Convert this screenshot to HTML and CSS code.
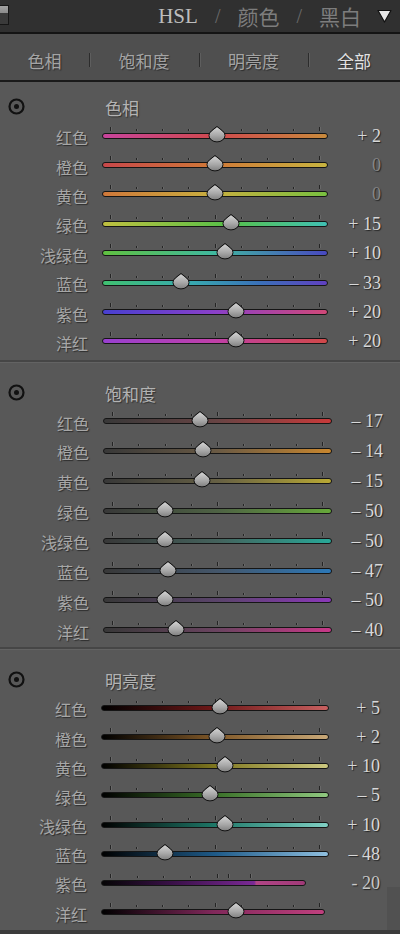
FILE: index.html
```html
<!DOCTYPE html>
<html lang="zh-CN">
<head>
<meta charset="utf-8">
<title>HSL</title>
<link rel="stylesheet" href="styles.css">
</head>
<body>
<div class="panel">
  <header class="top">
    <div class="corner"></div>
    <nav class="modes">
      <span class="mode hsl">HSL</span>
      <span class="slash">/</span>
      <span class="mode">颜色</span>
      <span class="slash">/</span>
      <span class="mode">黑白</span>
      <svg class="caret" viewBox="0 0 15 14"><polygon points="1,1.5 14,1.5 7.5,13" fill="#e6e6e6" stroke="#111" stroke-width="1.2" stroke-linejoin="round"/></svg>
    </nav>
  </header>

  <div class="tabs">
    <span class="tab">色相</span>
    <span class="tab">饱和度</span>
    <span class="tab">明亮度</span>
    <span class="tab active">全部</span>
  </div>

  <section class="group g1">
    <div class="head">
      <svg class="target" viewBox="0 0 17 17"><circle cx="8.5" cy="8.5" r="7" fill="none" stroke="#111" stroke-width="2.2"/><circle cx="8.5" cy="8.5" r="2.5" fill="#111"/></svg>
      <span class="gtitle">色相</span>
    </div>
    <div class="row"><span class="label">红色</span><div class="slider" style="--v:2"><div class="ticks"><i></i><i></i><i></i><i></i><i></i><i></i><i></i><i></i><i></i></div><div class="track h-red"></div><span class="thumb"></span></div><span class="val">+ 2</span></div>
    <div class="row"><span class="label">橙色</span><div class="slider" style="--v:0"><div class="ticks"><i></i><i></i><i></i><i></i><i></i><i></i><i></i><i></i><i></i></div><div class="track h-orange"></div><span class="thumb"></span></div><span class="val zero">0</span></div>
    <div class="row"><span class="label">黄色</span><div class="slider" style="--v:0"><div class="ticks"><i></i><i></i><i></i><i></i><i></i><i></i><i></i><i></i><i></i></div><div class="track h-yellow"></div><span class="thumb"></span></div><span class="val zero">0</span></div>
    <div class="row"><span class="label">绿色</span><div class="slider" style="--v:15"><div class="ticks"><i></i><i></i><i></i><i></i><i></i><i></i><i></i><i></i><i></i></div><div class="track h-green"></div><span class="thumb"></span></div><span class="val">+ 15</span></div>
    <div class="row"><span class="label">浅绿色</span><div class="slider" style="--v:10"><div class="ticks"><i></i><i></i><i></i><i></i><i></i><i></i><i></i><i></i><i></i></div><div class="track h-aqua"></div><span class="thumb"></span></div><span class="val">+ 10</span></div>
    <div class="row"><span class="label">蓝色</span><div class="slider" style="--v:-33"><div class="ticks"><i></i><i></i><i></i><i></i><i></i><i></i><i></i><i></i><i></i></div><div class="track h-blue"></div><span class="thumb"></span></div><span class="val">– 33</span></div>
    <div class="row"><span class="label">紫色</span><div class="slider" style="--v:20"><div class="ticks"><i></i><i></i><i></i><i></i><i></i><i></i><i></i><i></i><i></i></div><div class="track h-purple"></div><span class="thumb"></span></div><span class="val">+ 20</span></div>
    <div class="row"><span class="label">洋红</span><div class="slider" style="--v:20"><div class="ticks"><i></i><i></i><i></i><i></i><i></i><i></i><i></i><i></i><i></i></div><div class="track h-magenta"></div><span class="thumb"></span></div><span class="val">+ 20</span></div>
  </section>

  <div class="sep sep1"></div>

  <section class="group g2">
    <div class="head">
      <svg class="target" viewBox="0 0 17 17"><circle cx="8.5" cy="8.5" r="7" fill="none" stroke="#111" stroke-width="2.2"/><circle cx="8.5" cy="8.5" r="2.5" fill="#111"/></svg>
      <span class="gtitle">饱和度</span>
    </div>
    <div class="row"><span class="label">红色</span><div class="slider" style="--v:-17"><div class="ticks"><i></i><i></i><i></i><i></i><i></i><i></i><i></i><i></i><i></i></div><div class="track s-red"></div><span class="thumb"></span></div><span class="val">– 17</span></div>
    <div class="row"><span class="label">橙色</span><div class="slider" style="--v:-14"><div class="ticks"><i></i><i></i><i></i><i></i><i></i><i></i><i></i><i></i><i></i></div><div class="track s-orange"></div><span class="thumb"></span></div><span class="val">– 14</span></div>
    <div class="row"><span class="label">黄色</span><div class="slider" style="--v:-15"><div class="ticks"><i></i><i></i><i></i><i></i><i></i><i></i><i></i><i></i><i></i></div><div class="track s-yellow"></div><span class="thumb"></span></div><span class="val">– 15</span></div>
    <div class="row"><span class="label">绿色</span><div class="slider" style="--v:-50"><div class="ticks"><i></i><i></i><i></i><i></i><i></i><i></i><i></i><i></i><i></i></div><div class="track s-green"></div><span class="thumb"></span></div><span class="val">– 50</span></div>
    <div class="row"><span class="label">浅绿色</span><div class="slider" style="--v:-50"><div class="ticks"><i></i><i></i><i></i><i></i><i></i><i></i><i></i><i></i><i></i></div><div class="track s-aqua"></div><span class="thumb"></span></div><span class="val">– 50</span></div>
    <div class="row"><span class="label">蓝色</span><div class="slider" style="--v:-47"><div class="ticks"><i></i><i></i><i></i><i></i><i></i><i></i><i></i><i></i><i></i></div><div class="track s-blue"></div><span class="thumb"></span></div><span class="val">– 47</span></div>
    <div class="row"><span class="label">紫色</span><div class="slider" style="--v:-50"><div class="ticks"><i></i><i></i><i></i><i></i><i></i><i></i><i></i><i></i><i></i></div><div class="track s-purple"></div><span class="thumb"></span></div><span class="val">– 50</span></div>
    <div class="row"><span class="label">洋红</span><div class="slider" style="--v:-40"><div class="ticks"><i></i><i></i><i></i><i></i><i></i><i></i><i></i><i></i><i></i></div><div class="track s-magenta"></div><span class="thumb"></span></div><span class="val">– 40</span></div>
  </section>

  <div class="sep sep2"></div>

  <section class="group g3">
    <div class="head">
      <svg class="target" viewBox="0 0 17 17"><circle cx="8.5" cy="8.5" r="7" fill="none" stroke="#111" stroke-width="2.2"/><circle cx="8.5" cy="8.5" r="2.5" fill="#111"/></svg>
      <span class="gtitle">明亮度</span>
    </div>
    <div class="row"><span class="label">红色</span><div class="slider" style="--v:5"><div class="ticks"><i></i><i></i><i></i><i></i><i></i><i></i><i></i><i></i><i></i></div><div class="track l-red"></div><span class="thumb"></span></div><span class="val">+ 5</span></div>
    <div class="row"><span class="label">橙色</span><div class="slider" style="--v:2"><div class="ticks"><i></i><i></i><i></i><i></i><i></i><i></i><i></i><i></i><i></i></div><div class="track l-orange"></div><span class="thumb"></span></div><span class="val">+ 2</span></div>
    <div class="row"><span class="label">黄色</span><div class="slider" style="--v:10"><div class="ticks"><i></i><i></i><i></i><i></i><i></i><i></i><i></i><i></i><i></i></div><div class="track l-yellow"></div><span class="thumb"></span></div><span class="val">+ 10</span></div>
    <div class="row"><span class="label">绿色</span><div class="slider" style="--v:-5"><div class="ticks"><i></i><i></i><i></i><i></i><i></i><i></i><i></i><i></i><i></i></div><div class="track l-green"></div><span class="thumb"></span></div><span class="val">– 5</span></div>
    <div class="row"><span class="label">浅绿色</span><div class="slider" style="--v:10"><div class="ticks"><i></i><i></i><i></i><i></i><i></i><i></i><i></i><i></i><i></i></div><div class="track l-aqua"></div><span class="thumb"></span></div><span class="val">+ 10</span></div>
    <div class="row"><span class="label">蓝色</span><div class="slider" style="--v:-48"><div class="ticks"><i></i><i></i><i></i><i></i><i></i><i></i><i></i><i></i><i></i></div><div class="track l-blue"></div><span class="thumb"></span></div><span class="val">– 48</span></div>
    <div class="row"><span class="label">紫色</span><div class="slider"><div class="ticks odd"><i></i><i></i><i></i><i></i><i></i><i></i><i></i></div><div class="track l-purple cut-purple"></div></div><span class="val dim">- 20</span></div>
    <div class="row"><span class="label">洋红</span><div class="slider" style="--v:20"><div class="ticks"><i></i><i></i><i></i><i></i><i></i><i></i><i></i><i></i><i></i></div><div class="track l-magenta cut-magenta"></div><span class="thumb"></span></div><span class="val"></span></div>
  </section>

  <div class="edge"></div>
</div>
</body>
</html>
```

FILE: styles.css
```css
* { box-sizing: border-box; }

body {
  margin: 0;
  background: #3b3b3b;
  font-family: "Noto Sans CJK SC", "Noto Sans", sans-serif;
}

.panel {
  position: relative;
  width: 400px;
  height: 930px;
  background: #585858;
  overflow: hidden;
}

/* ---------- top header ---------- */
.top {
  height: 34px;
  background: #303030;
  border-bottom: 2px solid #141414;
  display: flex;
  align-items: center;
  justify-content: space-between;
  padding-right: 8px;
}

.corner {
  align-self: flex-start;
  margin-top: 5px;
  width: 9px;
  height: 20px;
  background: linear-gradient(#a2a2a2 0, #8c8c8c 38%, #3a3a3a 40%, #3a3a3a 100%);
  border: 1px solid #161616;
  border-left: none;
}

.modes {
  display: flex;
  align-items: center;
  gap: 17px;
}

.mode {
  font-size: 21px;
  line-height: 1;
  color: #7d7d7d;
}

.mode.hsl {
  font-family: "Liberation Serif", serif;
  font-size: 21px;
  color: #bdbdbd;
}

.slash {
  font-family: "Liberation Serif", serif;
  font-size: 20px;
  line-height: 1;
  color: #6a6a6a;
}

.caret {
  width: 15px;
  height: 14px;
  margin-left: -1px;
}

/* ---------- tabs ---------- */
.tabs {
  height: 48px;
  padding-top: 6px;
  background: #4f4f4f;
  border-bottom: 2px solid #1a1a1a;
  display: grid;
  grid-template-columns: 89px 110px 109px 1fr;
  align-items: center;
}

.tab {
  position: relative;
  text-align: center;
  font-size: 17px;
  line-height: 1;
  color: #a4a4a4;
  text-shadow: 1px 1px 1px rgba(0, 0, 0, 0.45);
}

.tab + .tab::before {
  content: "";
  position: absolute;
  left: 0;
  top: 50%;
  width: 1px;
  height: 14px;
  transform: translateY(-50%);
  background: #2c2c2c;
  box-shadow: 1px 0 0 #5e5e5e;
}

.tab.active { color: #e2e2e2; }

/* ---------- groups ---------- */
.group { padding-top: var(--pt); }

.g1 { --pt: 9px;  --hh: 30px; --rh: 29.4px; --lw: 88px; --tw: 226px; --pad: 8px; --vr: 19px; }
.g2 { --pt: 16px; --hh: 27px; --rh: 29.9px; --lw: 89px; --tw: 229px; --pad: 9px; --vr: 17px; }
.g3 { --pt: 15px; --hh: 28px; --rh: 29.2px; --lw: 87px; --tw: 228px; --pad: 9px; --vr: 20px; }

.head {
  height: var(--hh);
  display: grid;
  grid-template-columns: 102px 1fr;
  align-items: center;
}

.target {
  width: 17px;
  height: 17px;
  margin-left: 8px;
}

.gtitle {
  padding-left: 3px;
  padding-top: 2px;
  font-size: 17px;
  line-height: 1;
  color: #b3b3b3;
  text-shadow: 1px 1px 1px rgba(0, 0, 0, 0.45);
}

.sep {
  height: 3px;
  border-top: 2px solid #464646;
  border-bottom: 1px solid #636363;
}
.sep1 { margin-top: 4px; }
.sep2 { margin-top: 2px; }

/* ---------- rows ---------- */
.row {
  height: var(--rh);
  display: flex;
  align-items: center;
}

.label {
  width: var(--lw);
  flex: none;
  text-align: right;
  padding-top: 3px;
  font-size: 16px;
  line-height: 1;
  color: #a7a7a7;
  text-shadow: 1px 1px 1px rgba(0, 0, 0, 0.5);
}

.slider {
  position: relative;
  flex: none;
  width: var(--tw);
  margin-left: 14px;
  padding-bottom: 6px;
}

.ticks {
  height: 4px;
  margin-bottom: 2px;
  padding: 0 var(--pad);
  display: flex;
  justify-content: space-between;
  align-items: flex-end;
}

.ticks i {
  display: block;
  width: 1px;
  height: 2px;
  background: #242424;
  box-shadow: 1px 0 0 #686868;
}

.ticks i:first-child,
.ticks i:nth-child(5),
.ticks i:last-child { height: 4px; }

.ticks.odd { justify-content: flex-start; }
.ticks.odd i:nth-child(1) { margin-left: 0; }
.ticks.odd i:nth-child(2) { margin-left: 26px; }
.ticks.odd i:nth-child(3) { margin-left: 25px; }
.ticks.odd i:nth-child(4) { margin-left: 26px; }
.ticks.odd i:nth-child(5) { margin-left: 26px; }
.ticks.odd i:nth-child(6) { margin-left: 10px; height: 4px; }
.ticks.odd i:nth-child(7) { margin-left: 21px; height: 4px; }

.track {
  height: 6px;
  border: 1px solid #151515;
  border-radius: 3px;
}

.cut-purple { margin-right: 23px; }
.cut-magenta { margin-right: 4px; }

.thumb {
  position: absolute;
  top: 9px;
  left: calc(var(--pad) + 0.5px + (100% - 2 * var(--pad) - 1px) * (var(--v) + 100) / 200);
  width: 17px;
  height: 17px;
  border: 1.6px solid #111;
  border-radius: 0 50% 50% 50%;
  background: linear-gradient(135deg, #d4d4d4 0%, #a8a8a8 50%, #727272 100%);
  transform: translate(-50%, -50%) translateY(-0.5px) scaleY(0.8) rotate(45deg);
}

.val {
  flex: 1;
  text-align: right;
  padding-right: var(--vr);
  font-family: "Liberation Serif", serif;
  font-size: 18px;
  line-height: 1;
  color: #d8d8d8;
  text-shadow: 1px 1px 1px rgba(0, 0, 0, 0.6);
  white-space: pre;
}
.val.zero { color: #868686; }
.val.dim { color: #c8c8c8; }

/* ---------- hue tracks ---------- */
.h-red     { background: linear-gradient(to right, #c8449c, #d04a4e 50%, #c88a3c); }
.h-orange  { background: linear-gradient(to right, #c8484a, #d07a38 50%, #c8b440); }
.h-yellow  { background: linear-gradient(to right, #d0783a, #c8b040 50%, #78c040); }
.h-green   { background: linear-gradient(to right, #c0c040, #58c048 55%, #40c0b4); }
.h-aqua    { background: linear-gradient(to right, #60c040, #40b8a0 50%, #4848c0); }
.h-blue    { background: linear-gradient(to right, #40c070, #38a8b0 40%, #3a70b8 70%, #6040c0); }
.h-purple  { background: linear-gradient(to right, #4840d0, #8a40c8 50%, #d04878); }
.h-magenta { background: linear-gradient(to right, #9840d0, #c040a8 50%, #d04848); }

/* ---------- saturation tracks ---------- */
.s-red     { background: linear-gradient(to right, #383838, #684444 50%, #c83a3a); }
.s-orange  { background: linear-gradient(to right, #383838, #6a5a44 50%, #c8862e); }
.s-yellow  { background: linear-gradient(to right, #383838, #666044 50%, #b8a834); }
.s-green   { background: linear-gradient(to right, #383838, #4e6244 50%, #66a83a); }
.s-aqua    { background: linear-gradient(to right, #383838, #44625c 50%, #28a898); }
.s-blue    { background: linear-gradient(to right, #383838, #44566a 50%, #2c78b8); }
.s-purple  { background: linear-gradient(to right, #383838, #5a446a 50%, #8a38b8); }
.s-magenta { background: linear-gradient(to right, #383838, #6a4460 50%, #c83888); }

/* ---------- luminance tracks ---------- */
.l-red     { background: linear-gradient(to right, #000, #701818 50%, #c86060); }
.l-orange  { background: linear-gradient(to right, #000, #805828 50%, #c8a878); }
.l-yellow  { background: linear-gradient(to right, #000, #807820 50%, #ccc880); }
.l-green   { background: linear-gradient(to right, #000, #3a7028 50%, #90c880); }
.l-aqua    { background: linear-gradient(to right, #000, #1e7868 50%, #80d0c4); }
.l-blue    { background: linear-gradient(to right, #000, #1e5a88 50%, #90c0e0); }
.l-purple  { background: linear-gradient(to right, #050505, #3a1048 35%, #7a2a95 75%, #b04585 76%, #a03a78 100%); }
.l-magenta { background: linear-gradient(to right, #000, #80285a 50%, #c0407e); }

.edge {
  position: absolute;
  right: 0;
  bottom: 0;
  width: 13px;
  height: 43px;
  background: rgba(0, 0, 0, 0.08);
}
```
